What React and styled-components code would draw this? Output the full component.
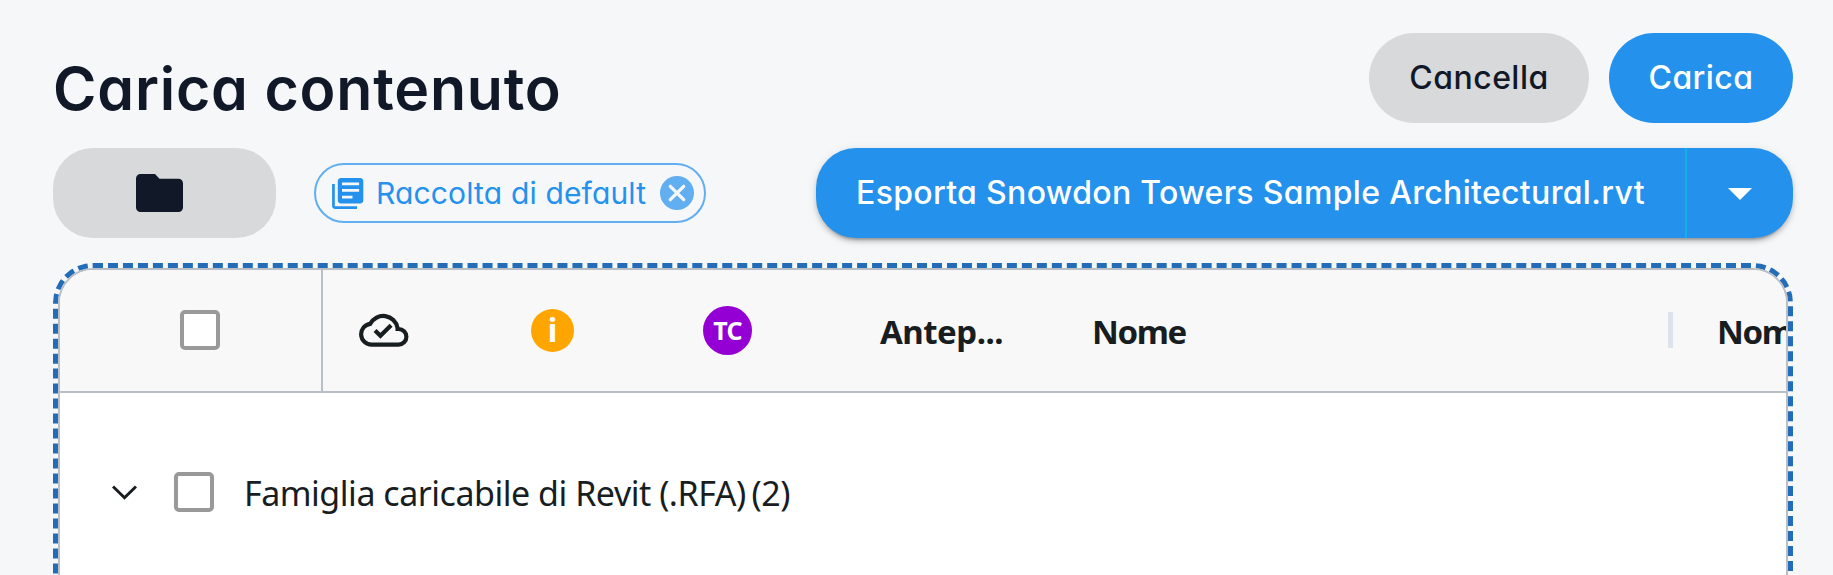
import React from "react";
import styled, { createGlobalStyle } from "styled-components";

const GlobalStyle = createGlobalStyle`
  *, *::before, *::after { box-sizing: border-box; }
  html, body { margin: 0; height: 100%; overflow: hidden; background: #f6f7f9; }
  button { font: inherit; border: 0; margin: 0; }
`;

const uiFont = `font-family: Inter, "Open Sans", sans-serif; font-feature-settings: "cv11";`;
const gridFont = `font-family: "Noto Sans", "Open Sans", sans-serif;`;

const Page = styled.main`
  ${uiFont}
  display: flex;
  flex-direction: column;
  height: 575px;
  padding: 33px 40px 0 53px;
  overflow: hidden;
  color: #111827;
`;

const TopBar = styled.header`
  display: flex;
  justify-content: space-between;
  height: 90px;
`;

const Title = styled.h1`
  margin: 20px 0 0;
  font-size: 59px;
  line-height: 72px;
  font-weight: 600;
  letter-spacing: 0.8px;
  white-space: nowrap;
`;

const Actions = styled.div`
  display: flex;
  gap: 20px;
`;

const Button = styled.button`
  display: flex;
  align-items: center;
  justify-content: center;
  width: ${(p) => p.$width}px;
  height: 90px;
  padding: 0 0 2px;
  border-radius: ${(p) => p.$radius || 45}px;
  background: ${(p) => (p.$primary ? "#2492ed" : "#d8d9db")};
  color: ${(p) => (p.$primary ? "#fff" : "#111827")};
  font-size: 32px;
  font-weight: 500;
  letter-spacing: 0.45px;
`;

const Toolbar = styled.div`
  display: flex;
  align-items: center;
  height: 90px;
  margin-top: 25px;
`;

const FolderIcon = styled.svg`
  margin: 2px 10px 0 0;
`;

const Chip = styled.div`
  display: flex;
  align-items: center;
  width: 392px;
  height: 60px;
  margin-left: 38px;
  padding-left: 14px;
  border: 2px solid #61aef1;
  border-radius: 30px;
  color: #2492ed;

  svg {
    flex: none;
  }
`;

const ChipLabel = styled.span`
  flex: none;
  width: 270px;
  margin: 0 14px 0 10px;
  font-size: 30px;
  letter-spacing: 0.15px;
  white-space: nowrap;
`;

const SplitButton = styled.div`
  display: flex;
  width: 977px;
  height: 90px;
  margin-left: auto;
  border-radius: 40px;
  background: #2492ed;
  color: #fff;
  box-shadow: 0 6px 2px -4px rgba(0, 0, 0, 0.2), 0 4px 4px rgba(0, 0, 0, 0.14),
    0 2px 10px rgba(0, 0, 0, 0.12);
`;

const SplitMain = styled.button`
  width: 871px;
  padding: 0 0 2px 40px;
  border-right: 2px solid #11b1e4;
  background: none;
  color: inherit;
  text-align: left;
  font-size: 32px;
  font-weight: 500;
  letter-spacing: 0.33px;
  white-space: nowrap;
`;

const SplitToggle = styled.button`
  display: flex;
  flex: 1;
  align-items: center;
  justify-content: center;
  padding: 2px 0 0;
  background: none;
  color: inherit;
`;

const DropZone = styled.section`
  ${gridFont}
  flex: none;
  width: 1740px;
  height: 1200px;
  margin-top: 25px;
  border: 5px dashed #226cb8;
  border-radius: 40px;
`;

const Grid = styled.div`
  height: 100%;
  overflow: hidden;
  border: 2px solid #babfc7;
  border-radius: 35px;
  background: #fff;
  color: #181d1f;
`;

const GridHeader = styled.div`
  display: flex;
  height: 123px;
  border-bottom: 2px solid #babfc7;
  background: #f8f8f8;
  font-size: 33px;
  font-weight: 700;
`;

const HeaderCell = styled.div`
  display: flex;
  flex: none;
  align-items: center;
  width: ${(p) => p.$width}px;
  padding: 0 0 1px ${(p) => p.$indent}px;
  border-right: ${(p) => (p.$pinned ? "2px solid #babfc7" : "0")};
  white-space: nowrap;
`;

const HeaderText = styled.span`
  padding-top: 3px;
  letter-spacing: ${(p) => p.$spacing}px;
`;

const ResizeHandle = styled.span`
  width: 5px;
  height: 36px;
  margin-left: auto;
  background: #dde2eb;
`;

const Checkbox = styled.span`
  flex: none;
  width: 40px;
  height: 40px;
  border: 4px solid #999;
  border-radius: 5px;
  background: #fff;
`;

const Badge = styled.span`
  display: flex;
  align-items: center;
  justify-content: center;
  width: ${(p) => p.$size}px;
  height: ${(p) => p.$size}px;
  border-radius: 50%;
  background: ${(p) => p.$color};
  color: #fff;
  font-size: ${(p) => p.$font}px;
  line-height: 1;
  letter-spacing: ${(p) => p.$spacing || 0}px;
`;

const GroupRow = styled.div`
  display: flex;
  align-items: center;
  height: 198px;
  padding-left: 52px;
`;

const GroupLabel = styled.span`
  margin: 1px 0 0 30px;
  font-size: 34px;
  letter-spacing: -0.48px;
  white-space: nowrap;
`;

const GroupCount = styled(GroupLabel)`
  margin-left: 6px;
`;

const Chevron = styled.svg`
  margin-right: 37px;
`;

export default function App() {
  return (
    <>
      <GlobalStyle />
      <Page>
        <TopBar>
          <Title>Carica contenuto</Title>
          <Actions>
            <Button $width={220}>Cancella</Button>
            <Button $width={184} $primary>Carica</Button>
          </Actions>
        </TopBar>
        <Toolbar>
          <Button $width={223} $radius={40} aria-label="Cartella">
            <FolderIcon width="47" height="38" viewBox="0 0 47 38" fill="currentColor">
              <path d="M4.500 0H19l4.500 4.700h19A4.500 4.500 0 0 1 47 9.200v24.300a4.500 4.500 0 0 1-4.500 4.500h-38A4.500 4.500 0 0 1 0 33.500v-29A4.500 4.500 0 0 1 4.500 0Z" />
            </FolderIcon>
          </Button>
          <Chip>
            <svg width="36" height="36" viewBox="0 0 24 24" fill="currentColor">
              <path d="M3.200 6H1.400v14.600c0 1.100.9 2 2 2H18v-1.800H3.200z" />
              <path fillRule="evenodd" d="M7.200 2h13c1.100 0 2 .9 2 2v13c0 1.100-.9 2-2 2h-13c-1.100 0-2-.9-2-2V4c0-1.100.9-2 2-2zM8 5v1.800h11.400V5zm0 4.400v1.800h11.400V9.400zm0 4.400v1.800h7v-1.800z" />
            </svg>
            <ChipLabel>Raccolta di default</ChipLabel>
            <svg width="34" height="34" viewBox="0 0 34 34">
              <circle cx="17" cy="17" r="17" fill="#61aef1" />
              <path d="M10.300 10.300l13.400 13.400M23.700 10.300L10.300 23.700" stroke="#f6f7f9" strokeWidth="3.300" strokeLinecap="round" />
            </svg>
          </Chip>
          <SplitButton>
            <SplitMain>Esporta Snowdon Towers Sample Architectural.rvt</SplitMain>
            <SplitToggle aria-label="Altre opzioni">
              <svg width="24" height="12" viewBox="0 0 24 12" fill="currentColor">
                <path d="M0 0h24L12 12z" />
              </svg>
            </SplitToggle>
          </SplitButton>
        </Toolbar>
        <DropZone>
          <Grid>
            <GridHeader>
              <HeaderCell $width={263} $indent={120} $pinned>
                <Checkbox />
              </HeaderCell>
              <HeaderCell $width={172} $indent={36}>
                <svg width="50" height="50" viewBox="0 0 24 24" fill="none" stroke="currentColor" strokeWidth="2">
                  <path d="M19 19H6a5 5 0 0 1-.6-9.960A7 7 0 0 1 18.500 11v.500h.500a3.750 3.750 0 0 1 0 7.500Z" />
                  <path d="M7.700 12.200l2.600 2.600 5.100-5.100" />
                </svg>
              </HeaderCell>
              <HeaderCell $width={172} $indent={36}>
                <Badge $size={43} $color="#ffa500" $font={32}>i</Badge>
              </HeaderCell>
              <HeaderCell $width={172} $indent={36}>
                <Badge $size={49} $color="#9400d3" $font={25} $spacing={-0.8}>TC</Badge>
              </HeaderCell>
              <HeaderCell $width={216} $indent={41}>
                <HeaderText $spacing={-0.5}>Antep...</HeaderText>
              </HeaderCell>
              <HeaderCell $width={618} $indent={37}>
                <HeaderText $spacing={-1.4}>Nome</HeaderText>
                <ResizeHandle />
              </HeaderCell>
              <HeaderCell $width={300} $indent={44}>
                <HeaderText $spacing={-1.4}>Nome file</HeaderText>
              </HeaderCell>
            </GridHeader>
            <GroupRow>
              <Chevron width="25" height="15" viewBox="0 0 25 15" fill="none" stroke="currentColor" strokeWidth="3">
                <path d="M1 1.500l11.500 11.200L24 1.500" />
              </Chevron>
              <Checkbox />
              <GroupLabel>Famiglia caricabile di Revit (.RFA)</GroupLabel>
              <GroupCount>(2)</GroupCount>
            </GroupRow>
          </Grid>
        </DropZone>
      </Page>
    </>
  );
}
